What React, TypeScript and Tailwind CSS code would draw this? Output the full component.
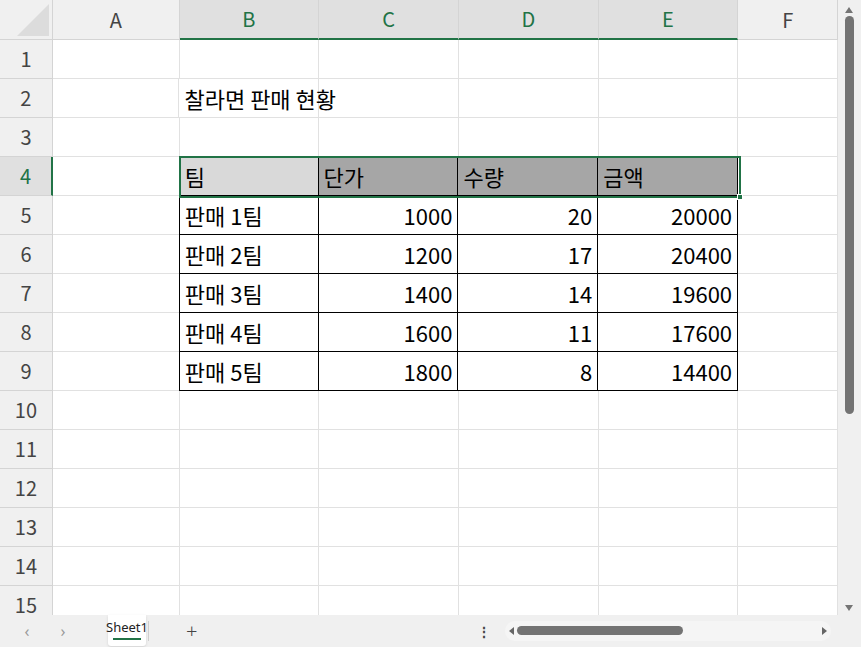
import React from "react";

const cols = ["A", "B", "C", "D", "E", "F"];
const widths = [127, 140, 140, 140, 140, 100];
const selCols = ["B", "C", "D", "E"];

type Cell = { t?: string; right?: boolean; bg?: string; table?: boolean };

const data: Record<number, Cell[]> = {
  2: [{}, { t: "찰라면 판매 현황" }],
  4: [{}, { t: "팀", bg: "bg-[#d9d9d9]", table: true }, { t: "단가", bg: "bg-[#a6a6a6]", table: true }, { t: "수량", bg: "bg-[#a6a6a6]", table: true }, { t: "금액", bg: "bg-[#a6a6a6]", table: true }],
};
const rows = [
  ["판매 1팀", "1000", "20", "20000"],
  ["판매 2팀", "1200", "17", "20400"],
  ["판매 3팀", "1400", "14", "19600"],
  ["판매 4팀", "1600", "11", "17600"],
  ["판매 5팀", "1800", "8", "14400"],
];
rows.forEach((r, i) => {
  data[5 + i] = [{}, { t: r[0], table: true }, ...r.slice(1).map((v) => ({ t: v, right: true, table: true }))];
});

export default function App() {
  return (
    <div className="relative w-[861px] h-[647px] overflow-hidden bg-white text-black" style={{ fontFamily: '"Noto Sans CJK KR", "Noto Sans", sans-serif' }}>
      <div className="flex">
        <div className="w-[838px]">
          {/* column headers */}
          <div className="flex h-[40px] bg-[#f0f0f0] text-[20px]">
            <div className="relative w-[53px] border-r border-b border-[#d4d4d4]">
              <div className="absolute right-[3px] bottom-[3px] w-0 h-0 border-l-[32px] border-l-transparent border-b-[32px] border-b-[#dcdcdc]" />
            </div>
            {cols.map((c, i) => {
              const sel = selCols.includes(c);
              return (
                <div
                  key={c}
                  style={{ width: widths[i] }}
                  className={`flex items-center justify-center border-r border-[#d4d4d4] ${sel ? "bg-[#e0e0e0] text-[#217346] border-b-2 border-b-[#217346]" : "text-[#444] border-b border-b-[#d4d4d4]"}`}
                >
                  {c}
                </div>
              );
            })}
          </div>
          {Array.from({ length: 15 }, (_, r) => r + 1).map((n) => {
            const row = data[n] || [];
            return (
              <div key={n} className="flex h-[39px]">
                <div className={`w-[53px] flex items-center justify-center text-[20px] border-b border-[#d4d4d4] ${n === 4 ? "bg-[#e0e0e0] text-[#217346] border-r-2 border-r-[#217346]" : "bg-[#f0f0f0] text-[#444] border-r border-r-[#d4d4d4]"}`}>
                  {n}
                </div>
                {widths.map((w, i) => {
                  const c = row[i] || {};
                  return (
                    <div
                      key={i}
                      style={{ width: w }}
                      className={`flex items-center px-[5px] text-[22px] whitespace-nowrap ${c.bg || ""} ${c.right ? "justify-end" : ""} ${c.table ? "border-r border-b border-black" : "border-r border-b border-[#e1e1e1]"} ${i === 1 && c.table ? "border-l border-l-black -ml-px" : ""}`}
                    >
                      {c.t}
                    </div>
                  );
                })}
              </div>
            );
          })}
        </div>
        {/* vertical scrollbar */}
        <div className="relative w-[23px] h-[615px] bg-[#f0f0f0]">
          <div className="absolute left-[7px] top-[7px] w-0 h-0 border-l-[4px] border-r-[4px] border-b-[6px] border-transparent border-b-[#757575]" />
          <div className="absolute left-[7px] top-[16px] w-[9px] h-[398px] rounded-full bg-[#737373]" />
          <div className="absolute left-[7px] bottom-[4px] w-0 h-0 border-l-[4px] border-r-[4px] border-t-[6px] border-transparent border-t-[#757575]" />
        </div>
      </div>

      {/* selection */}
      <div className="absolute left-[179px] top-[156px] w-[562px] h-[42px] border-2 border-[#217346] pointer-events-none" />
      <div className="absolute left-[737px] top-[194px] w-[6px] h-[6px] bg-[#217346] border border-white" />

      {/* bottom bar */}
      <div className="absolute left-0 top-[615px] w-[861px] h-[32px] bg-[#f0f0f0] flex items-center text-[#999]" style={{ fontFamily: '"Noto Sans", sans-serif' }}>
        <span className="ml-[16px] w-[22px] text-center text-[16px]">‹</span>
        <span className="ml-[14px] w-[22px] text-center text-[16px]">›</span>
        <div className="ml-[34px] -mt-[1px] h-[31px] w-[38px] ml-[33px] bg-white rounded-b-[3px] flex flex-col items-center justify-center text-[13px] text-[#222] shadow-sm" style={{ width: 38, marginLeft: 34 }}>
          <span className="leading-none">Sheet1</span>
          <div className="mt-[4px] h-[2px] w-[28px] bg-[#217346]" />
        </div>
        <div className="ml-[2px] h-[20px] w-px bg-[#cfcfcf]" />
        <span className="ml-[37px] text-[20px] text-[#444] font-light">+</span>
        <span className="ml-[280px] text-[14px] text-[#444] font-bold">⋮</span>
        <div className="ml-[14px] relative w-[326px] h-[20px] rounded-full bg-[#f5f5f5]">
          <div className="absolute left-[4px] top-[6px] w-0 h-0 border-t-[4px] border-b-[4px] border-r-[5px] border-transparent border-r-[#666]" />
          <div className="absolute left-[12px] top-[5px] w-[166px] h-[9px] rounded-full bg-[#737373]" />
          <div className="absolute right-[4px] top-[6px] w-0 h-0 border-t-[4px] border-b-[4px] border-l-[5px] border-transparent border-l-[#666]" />
        </div>
      </div>
    </div>
  );
}
